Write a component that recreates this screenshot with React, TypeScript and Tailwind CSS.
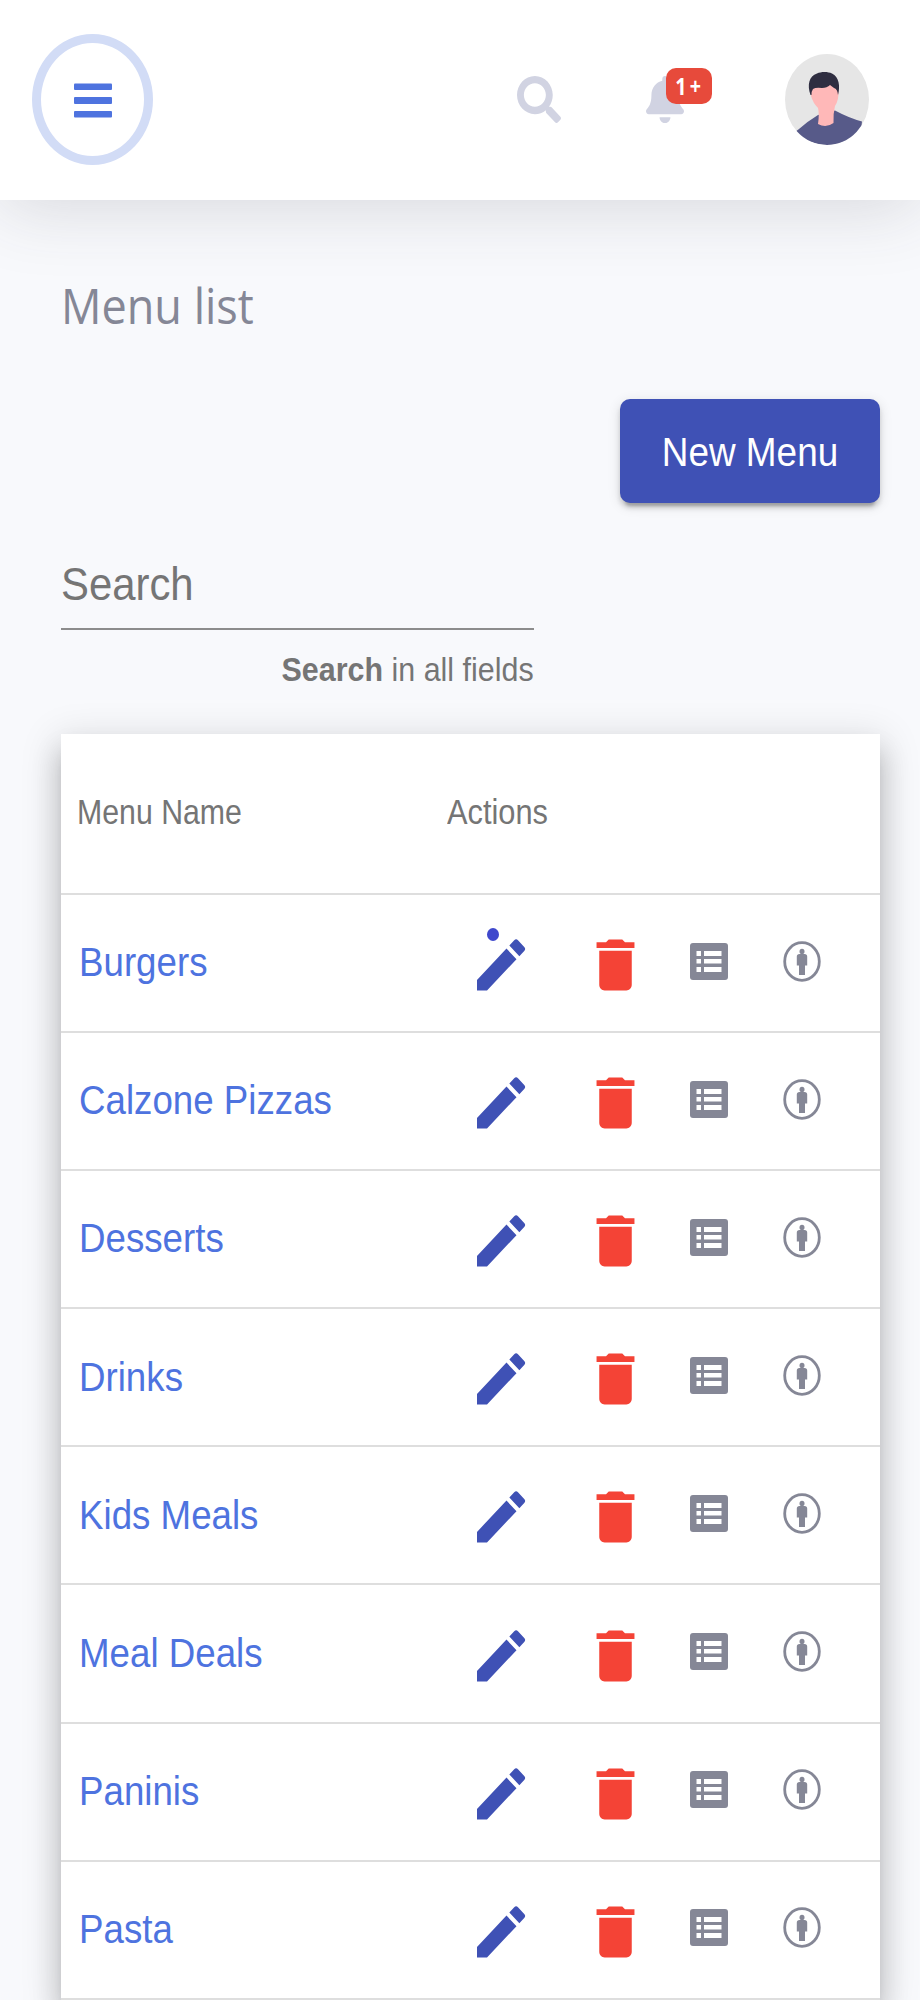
import { FaBell, FaSearch } from 'react-icons/fa';
import { MdCreate, MdDelete } from 'react-icons/md';

const menus = [
  'Burgers',
  'Calzone Pizzas',
  'Desserts',
  'Drinks',
  'Kids Meals',
  'Meal Deals',
  'Paninis',
  'Pasta',
];

function BarsIcon() {
  return (
    <svg viewBox="0 0 38 35" className="h-[35px] w-[38px] text-[#4e73df]" fill="currentColor">
      <rect y="0.5" width="38" height="6.5" rx="1" />
      <rect y="14" width="38" height="7" rx="1" />
      <rect y="28" width="38" height="6.5" rx="1" />
    </svg>
  );
}

function Avatar() {
  return (
    <svg viewBox="0 0 84 91" className="h-[91px] w-[84px]">
      <defs>
        <clipPath id="avatar-clip">
          <ellipse cx="42" cy="45.5" rx="42" ry="45.5" />
        </clipPath>
      </defs>
      <g clipPath="url(#avatar-clip)">
        <rect width="84" height="91" fill="#e6e6e6" />
        <path d="M10 78L14 75Q23 67 33 61L50 56.5Q64 64 77 67.5L76 76Q66 91 42 91Q24 91 10 78Z" fill="#575a89" />
        <path
          d="M26 34V42Q28 49 33 54Q34.5 60 33 70Q41 74.5 48.5 69Q48 60 50 52Q54 46 53.5 36L48 27H30Z"
          fill="#ffb8b8"
        />
        <path
          d="M25.5 41C22 31 24 22 32 19.5C36 17.5 43 17.5 47 19.5C54 23 55.5 32 53 41Q52.5 35 49 34L45 31Q42 34 37 34Q31 33 28 35Q26.5 37 26.5 41Z"
          fill="#2f2e41"
        />
      </g>
    </svg>
  );
}

function ListIcon() {
  return (
    <svg viewBox="0 0 38 37" className="ml-[42.5px] h-[37px] w-[38px] shrink-0 -translate-y-[2px]">
      <rect width="38" height="37" rx="3" fill="#858796" />
      <g fill="#fff">
        <rect x="6.5" y="8" width="4.5" height="5" />
        <rect x="14" y="8" width="17.5" height="5" />
        <rect x="6.5" y="16" width="4.5" height="4.5" />
        <rect x="14" y="16" width="17.5" height="4.5" />
        <rect x="6.5" y="24" width="4.5" height="5" />
        <rect x="14" y="24" width="17.5" height="5" />
      </g>
    </svg>
  );
}

function PersonCircle() {
  return (
    <svg viewBox="0 0 38 41" className="ml-[54.5px] h-[41px] w-[38px] shrink-0 -translate-y-[2px] text-[#858796]">
      <ellipse cx="19" cy="20.5" rx="17.3" ry="18.8" fill="none" stroke="currentColor" strokeWidth="2.8" />
      <ellipse cx="19" cy="10.5" rx="2.5" ry="2.7" fill="currentColor" />
      <path d="M16.5 13h5q2.7 0 2.7 2.5v9h-2.2v9.500h-6v-9.500h-2.2v-9q0-2.500 2.700-2.500z" fill="currentColor" />
    </svg>
  );
}

function Topbar() {
  return (
    <header className="relative flex h-[199.5px] items-center bg-white pl-8 shadow-[0_8px_70px_0_rgba(58,59,69,0.17)]">
      <button className="flex h-[131px] w-[121px] items-center justify-center rounded-[50%] border-[9px] border-[#d2dcf6] pt-[2px]">
        <BarsIcon />
      </button>
      <FaSearch preserveAspectRatio="none" className="ml-[364px] h-[47px] w-[44px] text-[#d1d3e2]" />
      <div className="relative ml-[85px]">
        <FaBell preserveAspectRatio="none" className="h-[47px] w-[38px] text-[#d1d3e2]" />
        <span className="absolute -top-2 left-5 flex h-9 w-[46px] items-center justify-center rounded-[10px] bg-[#e74a3b] pl-[2px] font-['Open_Sans',sans-serif] text-[24px] font-bold tracking-[4px] text-white">
          <span className="inline-block scale-x-[0.82]">1+</span>
        </span>
      </div>
      <div className="ml-[101px]">
        <Avatar />
      </div>
    </header>
  );
}

function MenuRow({ name, ripple }: { name: string; ripple?: boolean }) {
  return (
    <div className="flex h-[138.1px] items-center border-b-2 border-[#dedede]">
      <a className="w-[407.5px] shrink-0 pl-[18px] text-[41px] text-[#4e73df]">
        <span className="inline-block origin-left scale-x-[0.895] whitespace-nowrap">{name}</span>
      </a>
      <div className="relative shrink-0 translate-y-[2px]">
        <MdCreate preserveAspectRatio="none" className="h-[68px] w-[64px] text-[#3f51b5]" />
        {ripple && <span className="absolute -top-[3px] left-[18px] h-[13px] w-[12px] rounded-[50%] bg-[#3f48cc]" />}
      </div>
      <MdDelete preserveAspectRatio="none" className="ml-[50px] h-[68px] w-[65px] shrink-0 translate-y-[2px] text-[#f44336]" />
      <ListIcon />
      <PersonCircle />
    </div>
  );
}

export default function App() {
  return (
    <div className="h-[2000px] w-full overflow-hidden bg-white font-['Liberation_Sans',Arial,sans-serif]">
      <div className="h-full w-[920px] overflow-hidden bg-[#f8f9fc]">
        <Topbar />
        <main className="pr-[40.5px] pl-[61px]">
          <h1 className="h-[199px] pt-[68px] font-['Open_Sans',sans-serif] text-[50px] text-[#858796]">
            <span className="inline-block origin-left scale-x-[0.9]">Menu list</span>
          </h1>

          <div className="flex justify-end">
            <button className="flex h-[104.5px] w-[260px] items-center justify-center rounded-[10px] bg-[#3f51b5] pt-[3px] text-[41px] text-white shadow-[0_8px_3px_-5px_rgba(0,0,0,0.2),0_5px_5px_0_rgba(0,0,0,0.14),0_3px_13px_0_rgba(0,0,0,0.12)]">
              <span className="inline-block scale-x-[0.9] whitespace-nowrap">New Menu</span>
            </button>
          </div>

          <div className="w-[472.5px]">
            <div className="flex h-[127px] items-end border-b-2 border-[#8c8c8c] pb-[21px] text-[46px] leading-none text-[#757575]">
              <span className="inline-block origin-left scale-x-[0.91]">Search</span>
            </div>
            <p className="mt-[22px] flex justify-end text-[34px] leading-none text-[#757575]">
              <span className="inline-block origin-right scale-x-[0.895] whitespace-nowrap">
                <strong>Search</strong> in all fields
              </span>
            </p>
          </div>

          <section className="mt-[48px] bg-white shadow-[0_13px_13px_-8px_rgba(0,0,0,0.2),0_21px_26px_3px_rgba(0,0,0,0.14),0_8px_36px_5px_rgba(0,0,0,0.12)]">
            <div className="flex h-[161px] items-center border-b-2 border-[#dedede] pb-[2px] text-[35px] text-[#757575]">
              <div className="w-[385.5px] pl-[16px]">
                <span className="inline-block origin-left scale-x-[0.865] whitespace-nowrap">Menu Name</span>
              </div>
              <div>
                <span className="inline-block origin-left scale-x-[0.88]">Actions</span>
              </div>
            </div>
            {menus.map((name, i) => (
              <MenuRow key={name} name={name} ripple={i === 0} />
            ))}
          </section>
        </main>
      </div>
    </div>
  );
}
